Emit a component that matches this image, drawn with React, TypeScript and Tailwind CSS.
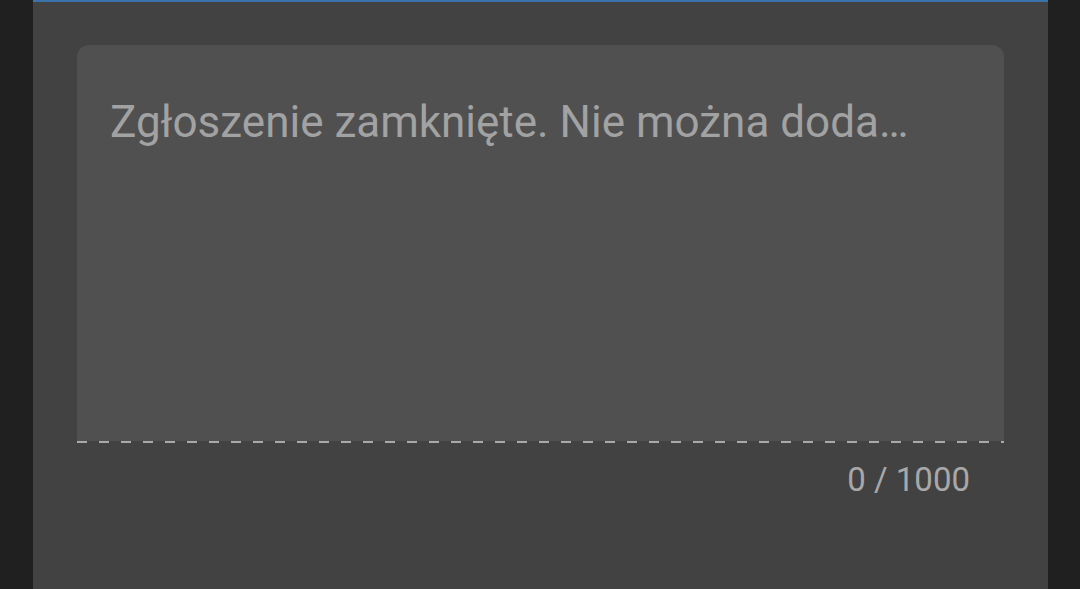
export default function App() {
  return (
    <div className="flex h-[589px] w-[1080px] overflow-hidden bg-[#202020] font-['Roboto',sans-serif]">
      <div className="ml-[33px] flex w-[1015px] flex-col border-t-2 border-[#3a72aa] bg-[#424242] px-[44px] pt-[43px]">
        <div className="flex h-[396px] flex-col rounded-t-[12px] bg-[#505050]">
          <div className="whitespace-nowrap pl-[33px] pt-[55px] text-[44px] leading-[44px] text-[#a2a2a2]">
            Zgłoszenie zamknięte. Nie można doda…
          </div>
        </div>
        <div className="h-[2px] bg-[repeating-linear-gradient(to_right,#a9a9a9_0,#a9a9a9_10px,transparent_10px,transparent_22px)]" />
        <div className="pr-[34px] pt-[20px] text-right text-[33px] leading-[33px] text-[#a8a8a8]">
          0 / 1000
        </div>
      </div>
    </div>
  )
}
